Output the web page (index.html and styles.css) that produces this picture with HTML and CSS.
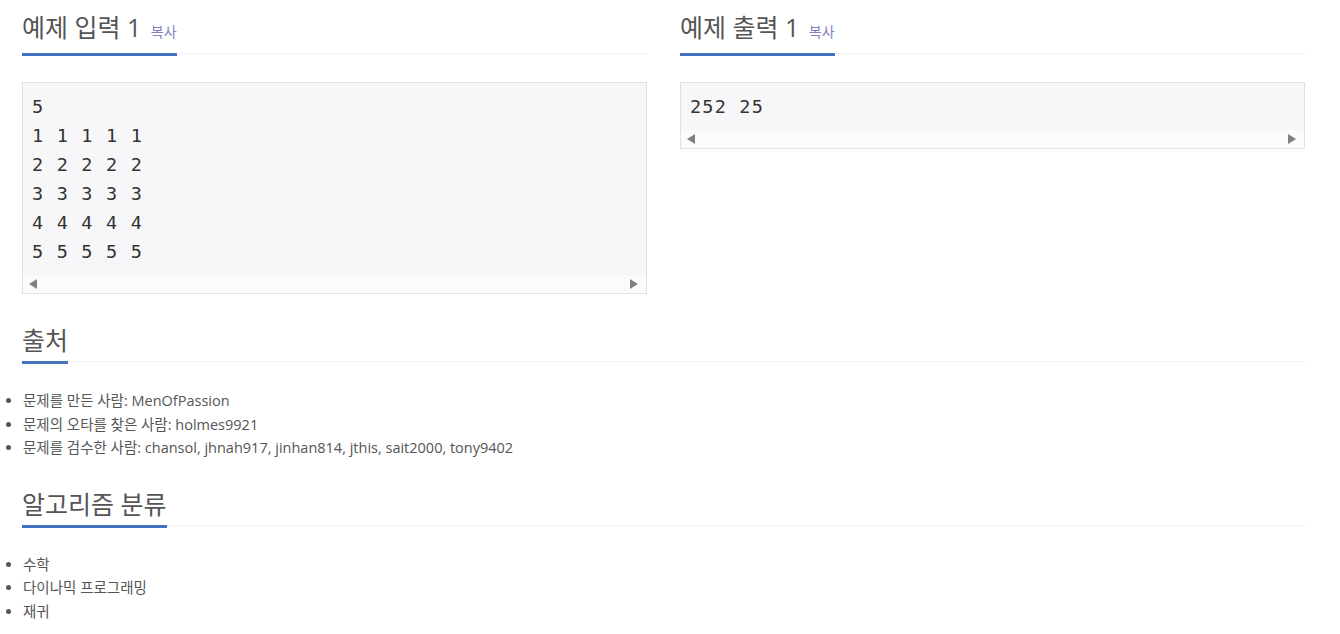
FILE: index.html
```html
<!DOCTYPE html>
<html lang="ko">
<head>
<meta charset="utf-8">
<title>문제</title>
<link rel="stylesheet" href="styles.css">
</head>
<body>
<div class="samples">
  <section class="sample">
    <div class="headline">
      <h2>예제 입력 1 <span class="copy">복사</span></h2>
    </div>
    <div class="code-box">
      <pre class="code">5
1 1 1 1 1
2 2 2 2 2
3 3 3 3 3
4 4 4 4 4
5 5 5 5 5</pre>
      <div class="hscroll"><span class="arrow left"></span><span class="arrow right"></span></div>
    </div>
  </section>
  <section class="sample">
    <div class="headline">
      <h2>예제 출력 1 <span class="copy">복사</span></h2>
    </div>
    <div class="code-box">
      <pre class="code">252 25</pre>
      <div class="hscroll"><span class="arrow left"></span><span class="arrow right"></span></div>
    </div>
  </section>
</div>

<section class="block">
  <div class="headline wide">
    <h2>출처</h2>
  </div>
  <ul class="items">
    <li>문제를 만든 사람: MenOfPassion</li>
    <li>문제의 오타를 찾은 사람: holmes9921</li>
    <li>문제를 검수한 사람: chansol, jhnah917, jinhan814, jthis, sait2000, tony9402</li>
  </ul>
</section>

<section class="block">
  <div class="headline wide">
    <h2>알고리즘 분류</h2>
  </div>
  <ul class="items">
    <li>수학</li>
    <li>다이나믹 프로그래밍</li>
    <li>재귀</li>
  </ul>
</section>
</body>
</html>
```

FILE: styles.css
```css
html, body {
  margin: 0;
  padding: 0;
  background: #fff;
}
body {
  font-family: "Open Sans", "Noto Sans CJK KR", sans-serif;
  color: #555;
}
.samples {
  display: grid;
  grid-template-columns: 625px 625px;
  column-gap: 33px;
  margin-left: 22px;
  padding-top: 11px;
}
.headline {
  display: flex;
  align-items: flex-end;
  border-bottom: 1px dotted #dfe3ea;
}
.headline.wide {
  margin: 0 34px 0 22px;
}
.headline h2 {
  margin: 0 0 -3px 0;
  font-size: 25px;
  font-weight: 400;
  line-height: 32px;
  color: #555;
  padding-bottom: 5px;
  border-bottom: 3px solid #4472c0;
  white-space: nowrap;
}
.copy {
  font-size: 14px;
  color: #7f80c0;
  margin-left: 3px;
}
.code-box {
  margin-top: 28px;
  border: 1px solid #e0e0e6;
  background: #f7f7f9;
}
.code {
  margin: 0;
  padding: 9px 9px 9px 9px;
  font-family: "DejaVu Sans Mono", monospace;
  font-size: 18.5px;
  letter-spacing: 1.2px;
  line-height: 29px;
  color: #333;
}
.hscroll {
  height: 18px;
  background: #fbfbfb;
  display: flex;
  align-items: center;
  justify-content: space-between;
  padding: 0 8px 0 6px;
}
.arrow {
  width: 0;
  height: 0;
  border-top: 5.5px solid transparent;
  border-bottom: 5.5px solid transparent;
}
.arrow.left {
  border-right: 8px solid #808080;
}
.arrow.right {
  border-left: 8px solid #808080;
}
.block {
  margin-top: 30px;
}
.block + .block {
  margin-top: 28px;
}
.items {
  margin: 27px 0 0 0;
  padding-left: 23px;
  font-size: 14.5px;
  line-height: 23.5px;
  color: #555;
}
```
